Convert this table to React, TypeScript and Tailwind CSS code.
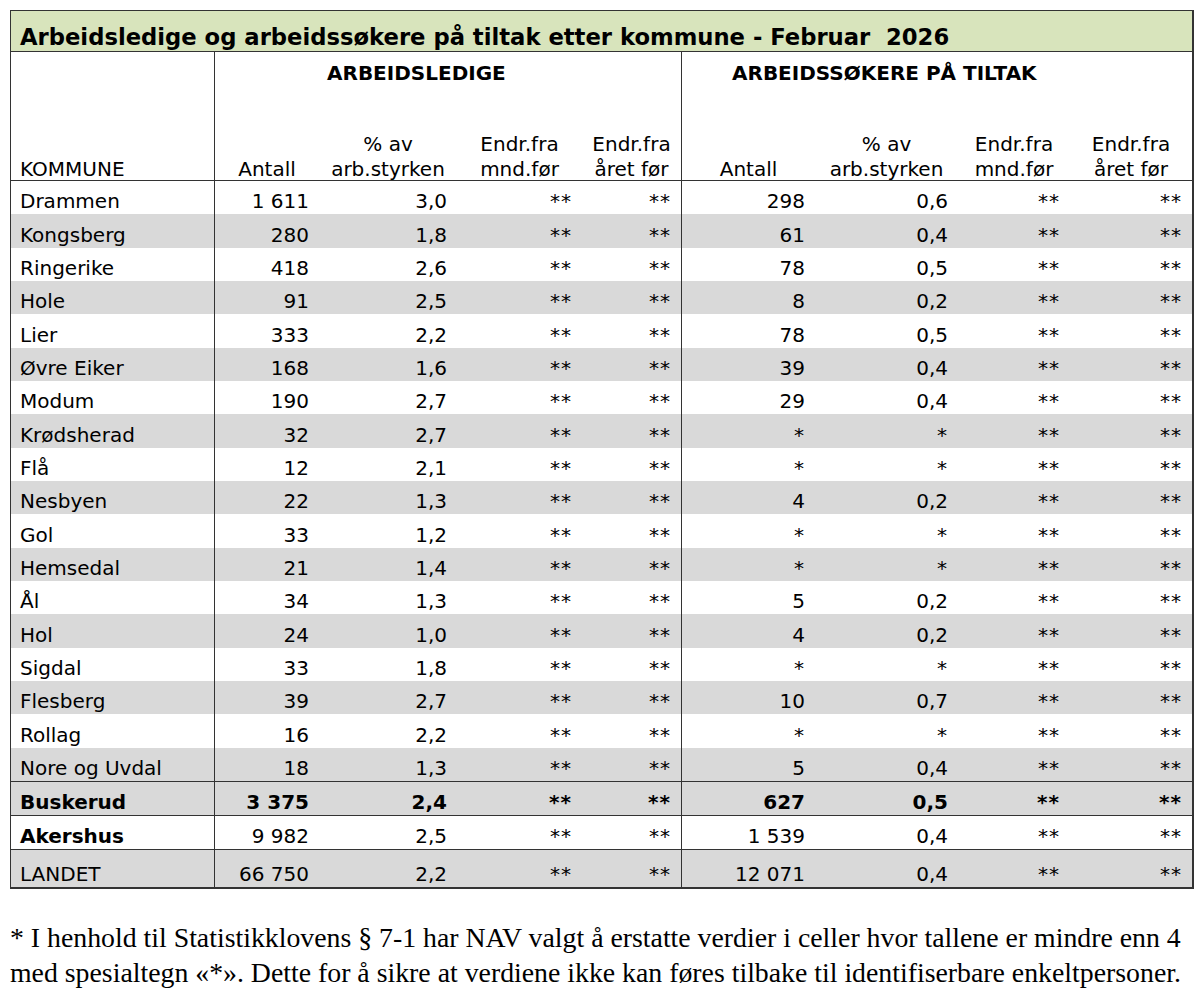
import React from "react";

type Row = {
    name: string;
    values: string[];
    bg: "white" | "gray";
    boldName?: boolean;
    boldAll?: boolean;
    border?: "top";
    h: string;
};

const cols = "grid grid-cols-[204px_104px_138px_125px_100px_133px_143px_112px_122px]";

const base: [string, string, string, string, string][] = [
    ["Drammen", "1 611", "3,0", "298", "0,6"],
    ["Kongsberg", "280", "1,8", "61", "0,4"],
    ["Ringerike", "418", "2,6", "78", "0,5"],
    ["Hole", "91", "2,5", "8", "0,2"],
    ["Lier", "333", "2,2", "78", "0,5"],
    ["Øvre Eiker", "168", "1,6", "39", "0,4"],
    ["Modum", "190", "2,7", "29", "0,4"],
    ["Krødsherad", "32", "2,7", "*", "*"],
    ["Flå", "12", "2,1", "*", "*"],
    ["Nesbyen", "22", "1,3", "4", "0,2"],
    ["Gol", "33", "1,2", "*", "*"],
    ["Hemsedal", "21", "1,4", "*", "*"],
    ["Ål", "34", "1,3", "5", "0,2"],
    ["Hol", "24", "1,0", "4", "0,2"],
    ["Sigdal", "33", "1,8", "*", "*"],
    ["Flesberg", "39", "2,7", "10", "0,7"],
    ["Rollag", "16", "2,2", "*", "*"],
    ["Nore og Uvdal", "18", "1,3", "5", "0,4"],
];

const rows: Row[] = [
    ...base.map(([name, a, p, ta, tp], i) => ({
        name,
        values: [a, p, "**", "**", ta, tp, "**", "**"],
        bg: (i % 2 === 0 ? "white" : "gray") as "white" | "gray",
        h: "h-[33.33px]",
    })),
    { name: "Buskerud", values: ["3 375", "2,4", "**", "**", "627", "0,5", "**", "**"], bg: "gray", boldAll: true, boldName: true, border: "top", h: "h-[34px]" },
    { name: "Akershus", values: ["9 982", "2,5", "**", "**", "1 539", "0,4", "**", "**"], bg: "white", boldName: true, border: "top", h: "h-[34px]" },
    { name: "LANDET", values: ["66 750", "2,2", "**", "**", "12 071", "0,4", "**", "**"], bg: "gray", border: "top", h: "h-[38px]" },
];

function SubHead({ top, bottom }: { top?: string; bottom: string }) {
    return (
        <div className="flex flex-col items-center justify-end leading-[25px] -mb-[2px]">
            {top && <span>{top}</span>}
            <span>{bottom}</span>
        </div>
    );
}

export default function App() {
    return (
        <div className="bg-white w-[1200px] h-[1005px] text-black">
            <div className="pl-[10px] pt-[10px]">
                <div className="w-[1184px] border-t border-l border-r-2 border-b-2 border-[#333] font-['DejaVu_Sans',sans-serif] text-[20px]">
                    <div className="h-[41px] bg-[#d8e4bc] border-b border-[#333] pl-[9px] pt-[13px] overflow-hidden">
                        <div className="font-bold text-[22.7px] leading-[26px] whitespace-pre">Arbeidsledige og arbeidssøkere på tiltak etter kommune - Februar  2026</div>
                    </div>
                    <div className={`${cols} h-[129px] border-b border-[#333]`}>
                        <div className="border-r border-[#333] flex items-end pl-[9px] -mb-[2px] leading-[25px]">KOMMUNE</div>
                        <div className="col-span-4 grid grid-rows-[auto_1fr] border-r border-[#333]">
                            <div className="pl-[112px] pt-[9px] font-bold leading-[25px]">ARBEIDSLEDIGE</div>
                            <div className="grid grid-cols-[104px_138px_125px_99px]">
                                <SubHead bottom="Antall" />
                                <SubHead top="% av" bottom="arb.styrken" />
                                <SubHead top="Endr.fra" bottom="mnd.før" />
                                <SubHead top="Endr.fra" bottom="året før" />
                            </div>
                        </div>
                        <div className="col-span-4 grid grid-rows-[auto_1fr]">
                            <div className="pl-[50px] pt-[9px] font-bold leading-[25px]">ARBEIDSSØKERE PÅ TILTAK</div>
                            <div className="grid grid-cols-[133px_143px_112px_122px]">
                                <SubHead bottom="Antall" />
                                <SubHead top="% av" bottom="arb.styrken" />
                                <SubHead top="Endr.fra" bottom="mnd.før" />
                                <SubHead top="Endr.fra" bottom="året før" />
                            </div>
                        </div>
                    </div>
                    {rows.map((r) => (
                        <div
                            key={r.name}
                            className={`${cols} ${r.h} ${r.bg === "gray" ? "bg-[#d9d9d9]" : "bg-white"} ${r.border === "top" ? "border-t border-[#333]" : ""} ${r.boldAll ? "font-bold" : ""}`}
                        >
                            <div className={`border-r border-[#333] flex items-end pl-[9px] pb-[1px] leading-[24px] ${r.boldName ? "font-bold" : ""}`}>
                                {r.name}
                            </div>
                            {r.values.map((v, i) => (
                                <div
                                    key={i}
                                    className={`flex items-end justify-end pr-[10px] pb-[1px] leading-[24px] ${v.startsWith("*") ? "tracking-[1px]" : ""} ${i === 3 ? "border-r border-[#333]" : ""}`}
                                >
                                    {v}
                                </div>
                            ))}
                        </div>
                    ))}
                </div>
                <div className="mt-[31px] font-['Liberation_Serif',serif] text-[27.8px] leading-[35px] whitespace-nowrap">
                    <p>* I henhold til Statistikklovens § 7-1 har NAV valgt å erstatte verdier i celler hvor tallene er mindre enn 4</p>
                    <p>med spesialtegn «*». Dette for å sikre at verdiene ikke kan føres tilbake til identifiserbare enkeltpersoner.</p>
                </div>
            </div>
        </div>
    );
}
